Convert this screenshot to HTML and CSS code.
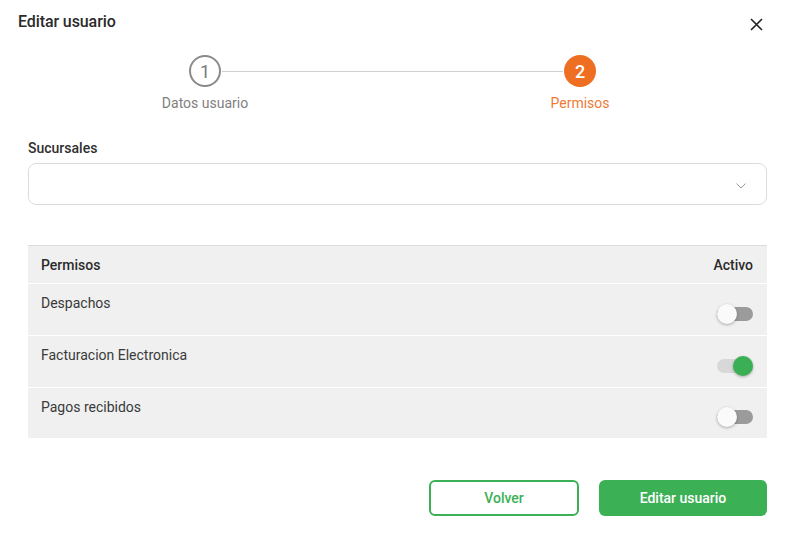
FILE: index.html
```html
<!DOCTYPE html>
<html lang="es">
<head>
<meta charset="utf-8">
<title>Editar usuario</title>
<link rel="stylesheet" href="styles.css">
</head>
<body>
<div class="dialog">
  <header class="dialog-header">
    <h1 class="dialog-title">Editar usuario</h1>
    <button class="close-btn" aria-label="Cerrar">
      <svg width="13" height="13" viewBox="0 0 13 13"><path d="M1 1L12 12M12 1L1 12" stroke="#222" stroke-width="1.6" fill="none"/></svg>
    </button>
  </header>

  <div class="stepper">
    <div class="step">
      <div class="step-circle step-done">1</div>
      <div class="step-label">Datos usuario</div>
    </div>
    <div class="step-line"></div>
    <div class="step">
      <div class="step-circle step-active">2</div>
      <div class="step-label step-label-active">Permisos</div>
    </div>
  </div>

  <div class="content">
    <label class="field-label">Sucursales</label>
    <div class="select">
      <svg class="chevron" width="10" height="6" viewBox="0 0 10 6"><path d="M0.5 0.5L5 5L9.5 0.5" stroke="#9a9a9a" stroke-width="1" fill="none"/></svg>
    </div>

    <div class="table">
      <div class="table-head">
        <span>Permisos</span>
        <span>Activo</span>
      </div>
      <div class="table-row">
        <span class="row-text">Despachos</span>
        <span class="switch"><span class="thumb"></span></span>
      </div>
      <div class="table-row">
        <span class="row-text">Facturacion Electronica</span>
        <span class="switch switch-on"><span class="thumb"></span></span>
      </div>
      <div class="table-row last">
        <span class="row-text">Pagos recibidos</span>
        <span class="switch"><span class="thumb"></span></span>
      </div>
    </div>

    <div class="actions">
      <button class="btn btn-outline">Volver</button>
      <button class="btn btn-solid">Editar usuario</button>
    </div>
  </div>
</div>
</body>
</html>
```

FILE: styles.css
```css
* { box-sizing: border-box; }
html, body { margin: 0; padding: 0; background: #fff; }
body { font-family: Roboto, "Noto Sans", "Liberation Sans", sans-serif; color: #333; }

.dialog { width: 785px; }

.dialog-header {
  display: flex;
  justify-content: space-between;
  align-items: center;
  padding: 12px 22px 0 18px;
}
.dialog-title {
  margin: 0;
  font-size: 16px;
  line-height: 20px;
  font-weight: 500;
  color: #2b2b2b;
  letter-spacing: -0.1px;
}
.close-btn {
  border: 0;
  background: none;
  padding: 0;
  width: 13px;
  height: 13px;
  margin-top: 4px;
  display: flex;
}

.stepper {
  display: flex;
  align-items: flex-start;
  margin-top: 23px;
  padding-left: 155px;
}
.step {
  width: 100px;
  display: flex;
  flex-direction: column;
  align-items: center;
  position: relative;
  z-index: 1;
}
.step-circle {
  width: 32px;
  height: 32px;
  border-radius: 50%;
  display: flex;
  align-items: center;
  justify-content: center;
  font-size: 18px;
  font-weight: 400;
}
.step-done {
  border: 2px solid #8a8a8a;
  color: #7a7a7a;
  background: #fff;
}
.step-active {
  background: #ee6f22;
  color: #fff;
  font-weight: 500;
}
.step-label {
  margin-top: 6px;
  font-size: 14px;
  line-height: 20px;
  color: #808080;
}
.step-label-active { color: #ee7a36; }
.step-line {
  width: 341px;
  flex: none;
  margin: 15.5px -33px 0;
  height: 1px;
  background: #d0d0d0;
}

.content { padding: 0 18px 0 28px; }

.field-label {
  display: block;
  margin-top: 26px;
  font-size: 14px;
  line-height: 18px;
  font-weight: 500;
  color: #2f2f2f;
}
.select {
  margin-top: 6px;
  height: 42px;
  border: 1px solid #dcdcdc;
  border-radius: 8px;
  display: flex;
  align-items: center;
  justify-content: flex-end;
  padding-right: 20px;
}
.chevron { margin-top: 4px; }

.table {
  margin-top: 40px;
  background: #f0f0f0;
  border-top: 1px solid #dcdcdc;
}
.table-head {
  display: flex;
  justify-content: space-between;
  align-items: center;
  height: 37px;
  padding: 0 14px 0 13px;
  font-size: 14px;
  font-weight: 500;
  color: #2b2b2b;
}
.table-row {
  height: 52px;
  border-top: 1px solid #fff;
  display: flex;
  justify-content: space-between;
  padding: 10px 14px 10px 13px;
  font-size: 14px;
  color: #3a3a3a;
}
.table-row.last { height: 51px; }
.row-text { line-height: 18px; }

.switch {
  align-self: flex-end;
  position: relative;
  width: 36px;
  height: 14px;
  border-radius: 7px;
  background: #9b9b9b;
  margin-bottom: 4px;
}
.switch .thumb {
  position: absolute;
  left: 0;
  top: -3px;
  width: 20px;
  height: 20px;
  border-radius: 50%;
  background: #fafafa;
  box-shadow: 0 1px 3px rgba(0,0,0,0.3);
}
.switch-on { background: #d8d8d8; }
.switch-on .thumb {
  left: 16px;
  background: #3aaf53;
}

.actions {
  display: flex;
  justify-content: flex-end;
  gap: 20px;
  margin-top: 42px;
}
.btn {
  height: 36px;
  border-radius: 6px;
  font-family: Roboto, "Noto Sans", "Liberation Sans", sans-serif;
  font-size: 14px;
  font-weight: 500;
  cursor: pointer;
}
.btn-outline {
  width: 150px;
  background: #fff;
  border: 2px solid #3cb055;
  color: #3cb055;
}
.btn-solid {
  width: 168px;
  background: #3cb055;
  border: 0;
  color: #fff;
}
```
